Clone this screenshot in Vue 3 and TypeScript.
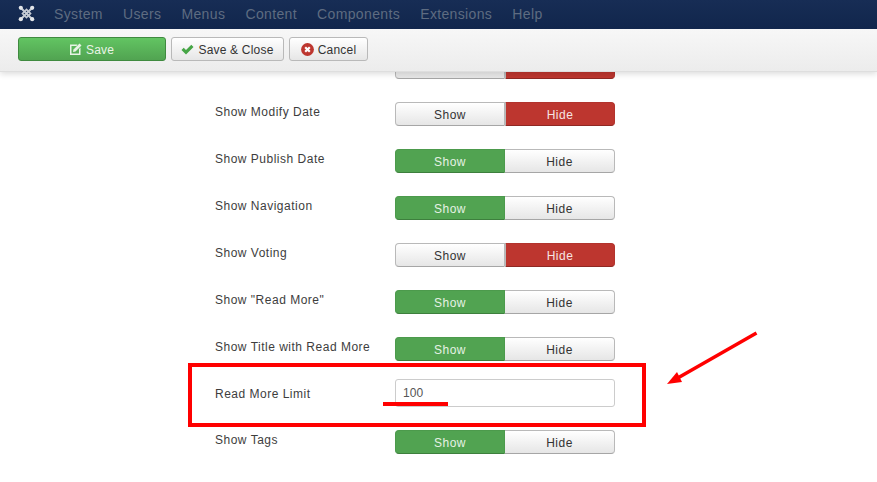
<script setup lang="ts">
interface Row { label: string; on?: 'show' | 'hide'; value?: string; hidden?: boolean }
const menu = ['System', 'Users', 'Menus', 'Content', 'Components', 'Extensions', 'Help']
const rows: Row[] = [
  { label: '', on: 'hide', hidden: true },
  { label: 'Show Modify Date', on: 'hide' },
  { label: 'Show Publish Date', on: 'show' },
  { label: 'Show Navigation', on: 'show' },
  { label: 'Show Voting', on: 'hide' },
  { label: 'Show "Read More"', on: 'show' },
  { label: 'Show Title with Read More', on: 'show' },
  { label: 'Read More Limit', value: '100' },
  { label: 'Show Tags', on: 'show' },
]
</script>

<template>
  <div class="page">
    <nav class="nav">
      <svg class="logo" width="17" height="17" viewBox="0 0 17 17">
        <g fill="none" stroke="#c4cad3" stroke-linecap="round">
          <path d="M3 3 14 14M14 3 3 14" stroke-width="2" />
          <path d="M4.500 8.500 8.500 4.500 12.500 8.500 8.500 12.500Z" stroke-width="1.700" />
        </g>
        <g fill="#e2e5e9">
          <circle cx="2.800" cy="2.800" r="2.100" />
          <circle cx="14.200" cy="2.800" r="2.100" />
          <circle cx="2.800" cy="14.200" r="2.100" />
          <circle cx="14.200" cy="14.200" r="2.100" />
        </g>
      </svg>
      <span v-for="m in menu" :key="m" class="nav-item">{{ m }}</span>
    </nav>

    <div class="toolbar">
      <button class="tbtn tbtn-save">
        <svg width="12" height="12" viewBox="0 0 12 12">
          <path d="M0 1.500h7.500L6.500 3H1.500v7.500h7.500V6l1.500-1.500V12H0z" fill="#e8f3e6" />
          <path d="M3.500 6.500 9.500.5l2 2-6 6-2.500.5z" fill="#e8f3e6" />
        </svg>
        <span class="tlabel">Save</span>
      </button>
      <button class="tbtn tbtn-close">
        <svg width="13" height="11" viewBox="0 0 13 11">
          <path d="M.5 6 2.700 3.800 5 6.100 10.300.8l2.200 2.200-7.500 7.500z" fill="#46a546" />
        </svg>
        <span class="tlabel">Save &amp; Close</span>
      </button>
      <button class="tbtn tbtn-cancel">
        <svg width="13" height="13" viewBox="0 0 13 13">
          <circle cx="6.500" cy="6.500" r="6.400" fill="#bd362f" />
          <path d="M4.200 4.200l4.600 4.600M8.800 4.200 4.200 8.800" stroke="#fff" stroke-width="2.200" />
        </svg>
        <span class="tlabel">Cancel</span>
      </button>
    </div>

    <main class="content">
      <div class="form">
        <div v-for="r in rows" :key="r.label" class="row" :class="{ 'row-input': r.value }">
          <label class="label">{{ r.label }}</label>
          <input v-if="r.value" class="field" :value="r.value" />
          <div v-else class="switch">
            <span class="opt" :class="{ 'opt-green': r.on === 'show' }">{{ r.hidden ? '' : 'Show' }}</span>
            <span class="opt" :class="{ 'opt-red': r.on === 'hide' }">{{ r.hidden ? '' : 'Hide' }}</span>
          </div>
        </div>
      </div>
    </main>

    <svg class="notes" width="877" height="482" viewBox="0 0 877 482">
      <rect x="190" y="365" width="454" height="60" fill="none" stroke="#ff0000" stroke-width="4" />
      <rect x="383" y="402" width="65" height="4" fill="#ff0000" />
      <path d="M756.500 333 676 379" stroke="#ff0000" stroke-width="3.500" />
      <path d="M667 384 677 372 682 382Z" fill="#ff0000" />
    </svg>
  </div>
</template>

<style>
html, body { margin: 0; background: #fff; }
</style>

<style scoped>
.page {
  position: relative;
  width: 877px;
  height: 482px;
  overflow: hidden;
  display: flex;
  flex-direction: column;
  background: #fff;
  font-family: "Liberation Sans", Arial, sans-serif;
  font-size: 12px;
  letter-spacing: 0.5px;
  color: #3d3d3d;
}
.nav {
  flex: none;
  height: 29px;
  display: flex;
  align-items: center;
  padding-left: 18px;
  background: linear-gradient(#172d55, #11264c);
  position: relative;
  z-index: 3;
}
.logo { margin-right: 19px; position: relative; top: -1px; }
.nav-item {
  font-size: 14px;
  letter-spacing: 0.35px;
  color: #5e6c81;
  margin-right: 20.2px;
  position: relative;
  top: -1px;
}
.toolbar {
  flex: none;
  height: 43px;
  box-sizing: border-box;
  padding: 8px 18px 0;
  display: flex;
  gap: 5px;
  align-items: flex-start;
  background: linear-gradient(#f7f7f7, #ececec);
  border-bottom: 1px solid #dedede;
  box-shadow: 0 2px 6px rgba(0, 0, 0, 0.14);
  position: relative;
  z-index: 2;
}
.tbtn {
  height: 24px;
  box-sizing: border-box;
  padding: 0;
  display: inline-flex;
  align-items: center;
  justify-content: center;
  gap: 4px;
  font: inherit;
  letter-spacing: 0.2px;
  color: #333;
  border: 1px solid #b9b9b9;
  border-radius: 3px;
  background: linear-gradient(#ffffff, #e6e6e6);
}
.tlabel { padding-top: 1px; }
.tbtn-save {
  width: 148px;
  color: #e9f4e6;
  border-color: #3f8a3f;
  background: linear-gradient(#62c462, #51a351);
}
.tbtn-close { width: 113px; }
.tbtn-cancel { width: 79px; }
.content {
  flex: 1;
  min-height: 0;
  overflow: hidden;
}
.form {
  margin-top: -17px;
  padding-left: 215px;
  display: flex;
  flex-direction: column;
}
.row {
  height: 47px;
  display: flex;
  align-items: flex-start;
}
.row-input {
  height: 51px;
  margin-top: -5px;
}
.label {
  width: 180px;
  flex: none;
  line-height: 16px;
  padding-top: 2px;
  white-space: nowrap;
}
.row-input .label { padding-top: 7px; }
.switch {
  width: 220px;
  height: 24px;
  display: flex;
}
.opt {
  width: 110px;
  box-sizing: border-box;
  display: flex;
  align-items: center;
  justify-content: center;
  background: linear-gradient(#ffffff, #e6e6e6);
  border: 1px solid #b9b9b9;
  border-bottom-color: #a6a6a6;
  color: #333;
  padding-top: 1px;
}
.opt:first-child { border-radius: 4px 0 0 4px; }
.opt:last-child { border-radius: 0 4px 4px 0; border-left: 0; }
.opt-green {
  background: #51a351;
  color: #e6f2e4;
  border-color: #4c9a4c;
  border-bottom-color: #3d7f3d;
}
.opt-red {
  background: #bd362f;
  color: #f6e4e2;
  border-color: #b2332d;
  border-bottom-color: #8f2823;
}
.opt-red:last-child { border-left: 1px solid #b9b9b9; }
.field {
  width: 220px;
  height: 28px;
  box-sizing: border-box;
  padding: 0 7px;
  border: 1px solid #ccc;
  border-radius: 3px;
  font: inherit;
  letter-spacing: 0.1px;
  color: #555;
  background: #fff;
  outline: none;
}
.notes {
  position: absolute;
  left: 0;
  top: 0;
  z-index: 4;
  pointer-events: none;
}
</style>
